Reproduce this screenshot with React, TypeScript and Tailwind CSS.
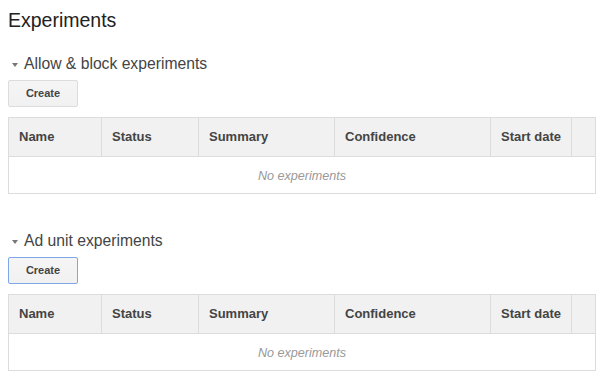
const columns = [
  { label: "Name", width: "w-[93px]" },
  { label: "Status", width: "w-[97px]" },
  { label: "Summary", width: "w-[136px]" },
  { label: "Confidence", width: "w-[156px]" },
  { label: "Start date", width: "w-[81px]" },
  { label: "", width: "w-[24px]" },
];

const ExperimentTable: React.FC = () => {
  return (
    <table className="w-[587px] table-fixed border-collapse border border-[#dcdcdc]">
      <thead>
        <tr className="h-[39px] bg-[#f1f1f1]">
          {columns.map((col, i) => (
            <th
              key={i}
              className={`${col.width} border border-[#dcdcdc] pl-[10px] text-left text-[13px] font-bold text-[#444]`}
            >
              {col.label}
            </th>
          ))}
        </tr>
      </thead>
      <tbody>
        <tr className="h-[37px]">
          <td
            colSpan={6}
            className="pt-[3px] text-center text-[12.6px] italic text-[#999]"
          >
            No experiments
          </td>
        </tr>
      </tbody>
    </table>
  );
};

const Section: React.FC<{ title: string; focused?: boolean }> = ({
  title,
  focused,
}) => {
  return (
    <div>
      {/* Section header with collapse arrow */}
      <div className="flex h-[20px] items-center text-[15.7px] leading-[20px] text-[#444]">
        <span className="ml-[4px] mr-[6px] mt-[1px] h-0 w-0 border-x-[3px] border-t-[4px] border-x-transparent border-t-[#777]" />
        <span>{title}</span>
      </div>

      <button
        className={`mt-[6px] h-[27px] w-[70px] rounded-[2px] border bg-gradient-to-b from-[#f5f5f5] to-[#f1f1f1] text-[11px] font-bold text-[#444] ${
          focused ? "border-[#7fa6e8]" : "border-[#dcdcdc]"
        }`}
      >
        Create
      </button>

      <div className="mt-[10px]">
        <ExperimentTable />
      </div>
    </div>
  );
};

export default function App() {
  return (
    <div
      className="min-h-[377px] w-[600px] bg-white pl-[8px] pt-[8px]"
      style={{ fontFamily: '"Liberation Sans", Arial, sans-serif' }}
    >
      <h1 className="h-[24px] text-[19.5px] font-normal leading-[24px] text-[#222]">
        Experiments
      </h1>

      <div className="mt-[22px]">
        <Section title="Allow & block experiments" />
      </div>

      <div className="mt-[37px]">
        <Section title="Ad unit experiments" focused />
      </div>
    </div>
  );
}
